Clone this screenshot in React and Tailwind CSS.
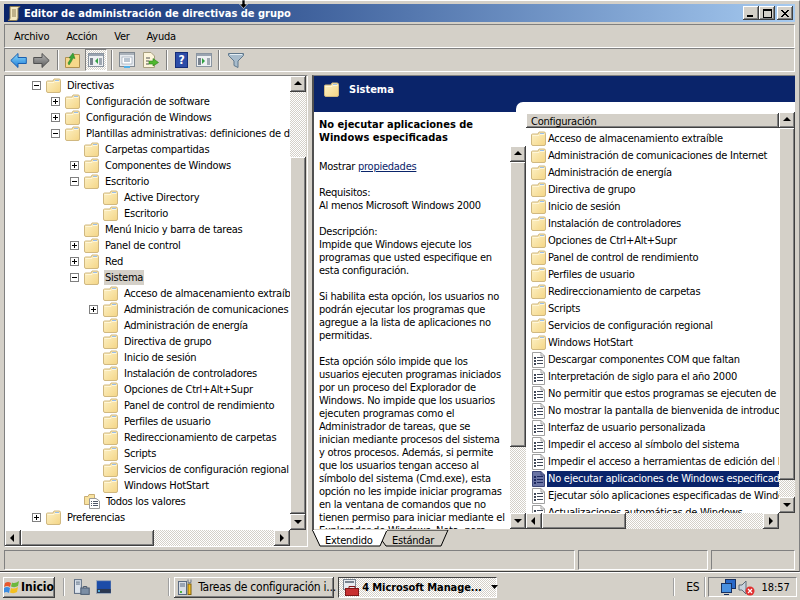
import React from 'react';

const bevel = 'shadow-[inset_-1px_-1px_0_#404040,inset_1px_1px_0_#ffffff,inset_-2px_-2px_0_#808080,inset_2px_2px_0_#d4d0c8]';
const checker = 'bg-[repeating-conic-gradient(#d4d0c8_0_25%,#ffffff_0_50%)] bg-[length:2px_2px]';

const Folder = ({ className = '' }) => (
  <svg width="15" height="15" viewBox="0 0 15 15" className={`shrink-0 ${className}`}>
    <defs>
      <linearGradient id="fold" x1="0" y1="0" x2="1" y2="1">
        <stop offset="0" stopColor="#fdf2c8" />
        <stop offset="1" stopColor="#f4d585" />
      </linearGradient>
    </defs>
    <path d="M.5 4Q.5 3 1.500 3H7L8 1H13Q14.500 1 14.500 2.500V13Q14.500 14.500 13 14.500H2Q.5 14.500 .5 13Z" fill="url(#fold)" stroke="#d0b880" />
    <rect x="9" y="2" width="4" height="1" fill="#9cc0ea" />
    <path d="M1.500 4.500H8L9 3.500H13.500" fill="none" stroke="#fff6d8" />
  </svg>
);

const Policy = ({ selected }) => (
  <svg width="15" height="16" viewBox="0 0 15 16" className="shrink-0">
    <path d="M1.500 .5H10L13.500 4V15.500H1.500Z" fill={selected ? '#6a74a4' : '#ffffff'} stroke={selected ? '#3c4678' : '#a0a0a0'} />
    <path d="M10 .5V4H13.500" fill="none" stroke={selected ? '#3c4678' : '#a0a0a0'} />
    <g fill={selected ? '#1c2860' : '#404858'}>
      <rect x="3" y="5" width="2" height="2" />
      <rect x="3" y="8" width="2" height="2" />
      <rect x="3" y="11" width="2" height="2" />
      <rect x="6" y="5" width="6" height="1" />
      <rect x="6" y="8" width="6" height="1" />
      <rect x="6" y="11" width="6" height="1" />
    </g>
  </svg>
);

const Expander = ({ open }) => (
  <svg width="9" height="9" viewBox="0 0 9 9" className="shrink-0">
    <rect x=".5" y=".5" width="8" height="8" fill="#ffffff" stroke="#808080" />
    <rect x="2" y="4" width="5" height="1" fill="#000000" />
    {!open && <rect x="4" y="2" width="1" height="5" fill="#000000" />}
  </svg>
);

const Arrow = ({ dir }) => {
  const pts = { up: '4,1 0,5 8,5', down: '0,2 8,2 4,6', left: '5,0 5,8 1,4', right: '2,0 2,8 6,4' };
  return (
    <svg width="8" height="8" viewBox="0 0 8 8">
      <polygon points={pts[dir]} fill="#000000" />
    </svg>
  );
};

const SBtn = ({ dir }) => (
  <div className={`w-[16px] h-[16px] shrink-0 bg-[#d4d0c8] flex items-center justify-center ${bevel}`}>
    <Arrow dir={dir} />
  </div>
);

const Thumb = ({ className }) => <div className={`shrink-0 bg-[#d4d0c8] ${bevel} ${className}`} />;

const treeIndent = {
  1: 'pl-[27px]',
  2: 'pl-[46px]',
  3: 'pl-[65px]',
  4: 'pl-[84px]',
};

const treeRows = [
  [1, 'open', 'Directivas'],
  [2, 'plus', 'Configuración de software'],
  [2, 'plus', 'Configuración de Windows'],
  [2, 'open', 'Plantillas administrativas: definiciones de directivas'],
  [3, '', 'Carpetas compartidas'],
  [3, 'plus', 'Componentes de Windows'],
  [3, 'open', 'Escritorio'],
  [4, '', 'Active Directory'],
  [4, '', 'Escritorio'],
  [3, '', 'Menú Inicio y barra de tareas'],
  [3, 'plus', 'Panel de control'],
  [3, 'plus', 'Red'],
  [3, 'open', 'Sistema', 'sel'],
  [4, '', 'Acceso de almacenamiento extraíble'],
  [4, 'plus', 'Administración de comunicaciones de Internet'],
  [4, '', 'Administración de energía'],
  [4, '', 'Directiva de grupo'],
  [4, '', 'Inicio de sesión'],
  [4, '', 'Instalación de controladores'],
  [4, '', 'Opciones de Ctrl+Alt+Supr'],
  [4, '', 'Panel de control de rendimiento'],
  [4, '', 'Perfiles de usuario'],
  [4, '', 'Redireccionamiento de carpetas'],
  [4, '', 'Scripts'],
  [4, '', 'Servicios de configuración regional'],
  [4, '', 'Windows HotStart'],
  [3, '', 'Todos los valores', 'all'],
  [1, 'plus', 'Preferencias'],
];

const AllValues = () => (
  <svg width="16" height="16" viewBox="0 0 16 16" className="shrink-0">
    <path d="M.5 3.500H4L5 1.500H10.500V11.500H.5Z" fill="#f8e2a0" stroke="#c8ad74" />
    <path d="M5.500 5.500H12L15.500 8V15.500H5.500Z" fill="#ffffff" stroke="#9a9a9a" />
    <g fill="#505868">
      <rect x="7" y="8" width="1" height="1" />
      <rect x="9" y="8" width="5" height="1" />
      <rect x="7" y="10" width="1" height="1" />
      <rect x="9" y="10" width="5" height="1" />
      <rect x="7" y="12" width="1" height="1" />
      <rect x="9" y="12" width="5" height="1" />
    </g>
  </svg>
);

const TreeRow = ({ row }) => {
  const [level, exp, label, flag] = row;
  return (
    <div className={`h-[16px] flex items-center whitespace-nowrap ${treeIndent[level]}`}>
      <div className="w-[9px] shrink-0 flex">{exp && <Expander open={exp === 'open'} />}</div>
      <div className="w-[5px] shrink-0" />
      {flag === 'all' ? <AllValues /> : <Folder />}
      <span className={`ml-[5px] px-[1px] h-[15px] leading-[15px] ${flag === 'sel' ? 'bg-[#d4d0c8]' : ''}`}>{label}</span>
    </div>
  );
};

const listFolders = [
  'Acceso de almacenamiento extraíble',
  'Administración de comunicaciones de Internet',
  'Administración de energía',
  'Directiva de grupo',
  'Inicio de sesión',
  'Instalación de controladores',
  'Opciones de Ctrl+Alt+Supr',
  'Panel de control de rendimiento',
  'Perfiles de usuario',
  'Redireccionamiento de carpetas',
  'Scripts',
  'Servicios de configuración regional',
  'Windows HotStart',
];

const listPolicies = [
  'Descargar componentes COM que faltan',
  'Interpretación de siglo para el año 2000',
  'No permitir que estos programas se ejecuten de forma',
  'No mostrar la pantalla de bienvenida de introducción',
  'Interfaz de usuario personalizada',
  'Impedir el acceso al símbolo del sistema',
  'Impedir el acceso a herramientas de edición del Registro',
  'No ejecutar aplicaciones de Windows especificadas',
  'Ejecutar sólo aplicaciones especificadas de Windows',
  'Actualizaciones automáticas de Windows',
];

const descLines = [
  'Al menos Microsoft Windows 2000',
  '',
  'Descripción:',
  'Impide que Windows ejecute los',
  'programas que usted especifique en',
  'esta configuración.',
  '',
  'Si habilita esta opción, los usuarios no',
  'podrán ejecutar los programas que',
  'agregue a la lista de aplicaciones no',
  'permitidas.',
  '',
  'Esta opción sólo impide que los',
  'usuarios ejecuten programas iniciados',
  'por un proceso del Explorador de',
  'Windows. No impide que los usuarios',
  'ejecuten programas como el',
  'Administrador de tareas, que se',
  'inician mediante procesos del sistema',
  'y otros procesos. Además, si permite',
  'que los usuarios tengan acceso al',
  'símbolo del sistema (Cmd.exe), esta',
  'opción no les impide iniciar programas',
  'en la ventana de comandos que no',
  'tienen permiso para iniciar mediante el',
  'Explorador de Windows. Nota: para',
];

const ToolSep = () => <div className="w-[2px] h-[20px] shrink-0 border-l border-l-[#808080] border-r border-r-white" />;

const NavArrow = ({ flip, light }) => (
  <svg width="17" height="15" viewBox="0 0 17 15" className={flip ? '-scale-x-100' : ''}>
    <defs>
      <linearGradient id={light ? 'ag' : 'ab'} x1="0" y1="0" x2="0" y2="1">
        <stop offset="0" stopColor={light ? '#b8b8b8' : '#8fdcfa'} />
        <stop offset="1" stopColor={light ? '#5c5c5c' : '#1c7ad8'} />
      </linearGradient>
    </defs>
    <path d="M8 .5L.8 7.500L8 14.500V10.500H16.300V4.500H8Z" fill={`url(#${light ? 'ag' : 'ab'})`} stroke={light ? '#505050' : '#1a5fb0'} />
  </svg>
);

const PaneIcon = ({ arrowLeft }) => (
  <svg width="16" height="14" viewBox="0 0 16 14">
    <rect x=".5" y=".5" width="15" height="13" fill="#eef0f2" stroke="#8a94a0" />
    <rect x="1" y="1" width="14" height="2" fill="#9aa4b0" />
    <rect x="2" y="5" width="3" height="7" fill="#7a8490" />
    {arrowLeft ? <polygon points="10,5 10,11 7,8" fill="#30a040" /> : <polygon points="6,5 6,11 9,8" fill="#30a040" />}
    <rect x="11" y="5" width="3" height="7" fill="#a0a8b2" />
  </svg>
);

const Flag = () => (
  <svg width="16" height="15" viewBox="0 0 16 15" className="shrink-0">
    <path d="M1 3Q4 1 7 3L6 7Q3 5 0 7Z" fill="#e8582c" />
    <path d="M8 2.500Q11 4 15 1L14 6Q11 8 7 6.500Z" fill="#6cb83c" />
    <path d="M0 8Q3 6 6 8L5 13Q2 11 -.5 13Z" fill="#3c8ce0" />
    <path d="M7 8Q10 9.500 14 7L13 12Q10 14 6 12.500Z" fill="#f4c020" />
  </svg>
);

export default function App() {
  return (
    <div className="w-[800px] h-[600px] relative overflow-hidden bg-[#d4d0c8] flex flex-col text-[11px] leading-[13px] tracking-[-0.25px] text-black [font-family:'DejaVu_Sans_Condensed','DejaVu_Sans',sans-serif]">
      {/* Window */}
      <div className="h-[572px] shrink-0 flex flex-col border-b border-b-[#404040] border-r border-r-[#808080] border-t border-t-white">
        <div className="h-[3px] shrink-0" />
        {/* Title bar */}
        <div className="mx-[4px] h-[18px] shrink-0 flex items-center bg-linear-to-r from-[#0a246a] to-[#a6caf0] pl-[3px] pr-[2px]">
          <svg width="14" height="15" viewBox="0 0 14 15" className="shrink-0">
            <path d="M3 .5H13L11 2.500V12Q11 14.500 9 14.500H1Q3 14 3 12Z" fill="#f4e8c0" stroke="#8a7a50" />
            <path d="M5 4H9M5 6H9M5 8H9M5 10H9" stroke="#8a7a50" />
          </svg>
          <span className="ml-[3px] font-bold text-white tracking-normal whitespace-nowrap">Editor de administración de directivas de grupo</span>
          <div className="ml-auto flex">
            <div className={`w-[16px] h-[14px] bg-[#d4d0c8] flex items-end pl-[4px] pb-[3px] ${bevel}`}>
              <div className="w-[6px] h-[2px] bg-black" />
            </div>
            <div className={`w-[16px] h-[14px] bg-[#d4d0c8] flex items-center justify-center ${bevel}`}>
              <div className="w-[9px] h-[9px] border border-black border-t-2" />
            </div>
            <div className={`ml-[2px] w-[16px] h-[14px] bg-[#d4d0c8] flex items-center justify-center ${bevel}`}>
              <svg width="8" height="7" viewBox="0 0 8 7">
                <path d="M0 0L7 7M1 0L8 7M7 0L0 7M8 0L1 7" stroke="#000000" />
              </svg>
            </div>
          </div>
        </div>

        {/* Menu */}
        <div className="mt-[2px] mx-[4px] h-[24px] shrink-0 flex items-center pl-[9px] gap-[17px] border-t border-t-[#808080] border-l border-l-[#808080] border-r border-r-white border-b border-b-white">
          <span>Archivo</span>
          <span>Acción</span>
          <span>Ver</span>
          <span>Ayuda</span>
        </div>

        {/* Toolbar */}
        <div className="mx-[4px] h-[24px] shrink-0 flex items-center pl-[5px] border-t border-t-[#808080] border-l border-l-[#808080] border-r border-r-white border-b border-b-white">
          <NavArrow />
          <div className="w-[6px]" />
          <NavArrow flip light />
          <div className="w-[7px]" />
          <ToolSep />
          <div className="w-[6px]" />
          <svg width="16" height="16" viewBox="0 0 16 16">
            <path d="M.5 5.500H8L9 2.500H14.500V15.500H.5Z" fill="#f6d88a" stroke="#b09050" />
            <path d="M3 11Q5 8 6 6L4 6L8 1L10 6.500L8 6Q7 9 4 13Z" fill="#3aa53a" stroke="#1f7a1f" strokeWidth=".5" />
          </svg>
          <div className="w-[4px]" />
          <div className={`w-[22px] h-[22px] flex items-center justify-center border border-t-[#808080] border-l-[#808080] border-b-white border-r-white ${checker}`}>
            <PaneIcon arrowLeft />
          </div>
          <div className="w-[4px]" />
          <ToolSep />
          <div className="w-[6px]" />
          <svg width="16" height="16" viewBox="0 0 16 16">
            <rect x=".5" y=".5" width="15" height="14" fill="#e8ecf0" stroke="#808890" />
            <rect x="1" y="1" width="14" height="2" fill="#aab2ba" />
            <rect x="3" y="5" width="10" height="7" fill="#ffffff" stroke="#8a98a8" strokeWidth=".6" />
            <path d="M5 7H11M5 9H11" stroke="#7088a0" />
            <rect x="5" y="14" width="6" height="2" fill="#50b0e8" />
          </svg>
          <div className="w-[7px]" />
          <svg width="17" height="16" viewBox="0 0 17 16">
            <path d="M1.500 .5H9L12.500 4V15.500H1.500Z" fill="#fdf6dc" stroke="#a8a080" />
            <path d="M4 6H8M4 9H7M4 12H7" stroke="#505050" />
            <path d="M7 9H11V6.500L16.500 10.500L11 14V12H7Z" fill="#50b830" stroke="#2a8018" strokeWidth=".6" />
          </svg>
          <div className="w-[7px]" />
          <ToolSep />
          <div className="w-[7px]" />
          <div className="w-[13px] h-[16px] bg-[#2c4ca8] border border-[#142c78] flex items-center justify-center text-white font-bold text-[12px]">?</div>
          <div className="w-[8px]" />
          <PaneIcon />
          <div className="w-[6px]" />
          <ToolSep />
          <div className="w-[8px]" />
          <svg width="16" height="15" viewBox="0 0 16 15">
            <path d="M.5 .5H15.500V2.500L10 8V14.500L6 12.500V8L.5 2.500Z" fill="#a8bccc" stroke="#60788c" />
            <path d="M2 1.500H14" stroke="#e4eef4" />
          </svg>
        </div>

        {/* Panes */}
        <div className="mt-[3px] mx-[4px] flex gap-[4px] h-[473px] shrink-0">
          {/* Tree pane */}
          <div className="w-[304px] h-[472px] shrink-0 flex flex-col border-t border-t-[#808080] border-l border-l-[#808080] border-b border-b-white border-r border-r-white">
            <div className="flex h-[454px] shrink-0">
              <div className="w-[285px] bg-white overflow-hidden pt-[1px]">
                {treeRows.map((row, i) => <TreeRow key={i} row={row} />)}
              </div>
              <div className={`w-[16px] flex flex-col ${checker}`}>
                <SBtn dir="up" />
                <div className="h-[65px] shrink-0" />
                <Thumb className="h-[357px]" />
                <div className="flex-1" />
                <SBtn dir="down" />
              </div>
            </div>
            <div className="flex h-[16px] shrink-0">
              <div className={`w-[285px] flex ${checker}`}>
                <SBtn dir="left" />
                <Thumb className="w-[133px]" />
                <div className="flex-1" />
                <SBtn dir="right" />
              </div>
              <div className="w-[16px] bg-[#d4d0c8]" />
            </div>
          </div>

          {/* Right column */}
          <div className="w-[483px] flex flex-col">
            <div className="h-[455px] shrink-0 flex flex-col border-t border-t-[#808080] border-l-2 border-l-[#505050] overflow-hidden">
              <div className="h-[36px] shrink-0 flex justify-between bg-[#0a246a]">
                <div className="flex pl-[10px] pt-[6px]">
                  <Folder />
                  <span className="ml-[10px] mt-[1px] text-white font-bold tracking-normal">Sistema</span>
                </div>
                <div className="w-[279px] h-[10px] mt-[26px] bg-white rounded-tl-[7px]" />
              </div>
              <div className="flex h-[417px] bg-white">
                {/* Description */}
                <div className="w-[212px] shrink-0 flex">
                  <div className="w-[196px] shrink-0 pl-[5px] pt-[6px] whitespace-nowrap overflow-hidden">
                    <div className="font-bold tracking-normal">No ejecutar aplicaciones de</div>
                    <div className="font-bold tracking-normal">Windows especificadas</div>
                    <div className="mt-[16px]">Mostrar <span className="underline text-[#0a246a]">propiedades</span></div>
                    <div className="mt-[13px]">Requisitos:</div>
                    {descLines.map((line, i) => <div key={i} className="h-[13px]">{line}</div>)}
                  </div>
                  <div className="w-[16px] mt-[34px] flex flex-col">
                    <SBtn dir="up" />
                    <Thumb className="h-[285px]" />
                    <div className={`flex-1 ${checker}`} />
                    <SBtn dir="down" />
                  </div>
                </div>
                {/* List */}
                <div className="w-[269px] flex flex-col">
                  <div className="h-[401px] flex shrink-0">
                    <div className="w-[253px] shrink-0 flex flex-col overflow-hidden">
                      <div className={`mt-[1px] h-[15px] shrink-0 bg-[#d4d0c8] pl-[5px] leading-[17px] ${bevel}`}>Configuración</div>
                      <div className="pt-[2px] h-[385px] overflow-hidden">
                        {listFolders.map((t) => (
                          <div key={t} className="h-[17px] flex items-center pl-[5px] whitespace-nowrap">
                            <Folder />
                            <span className="ml-[1px] px-[1px]">{t}</span>
                          </div>
                        ))}
                        {listPolicies.map((t, i) => (
                          <div key={t} className="h-[17px] flex items-center pl-[5px] whitespace-nowrap">
                            <Policy selected={i === 7} />
                            <span className={`ml-[1px] px-[1px] h-[16px] leading-[16px] flex-1 overflow-hidden ${i === 7 ? 'bg-[#0a246a] text-white' : ''}`}>{t}</span>
                          </div>
                        ))}
                      </div>
                    </div>
                    <div className="w-[16px] flex flex-col">
                      <SBtn dir="up" />
                      <Thumb className="h-[352px]" />
                      <div className={`flex-1 ${checker}`} />
                      <SBtn dir="down" />
                    </div>
                  </div>
                  <div className="h-[16px] flex shrink-0">
                    <div className={`w-[253px] flex ${checker}`}>
                      <SBtn dir="left" />
                      <Thumb className="w-[84px]" />
                      <div className="flex-1" />
                      <SBtn dir="right" />
                    </div>
                    <div className="w-[16px] bg-[#d4d0c8]" />
                  </div>
                </div>
              </div>
            </div>
            {/* Tabs */}
            <div className="relative h-[18px] w-[140px] shrink-0 flex items-center pt-[2px]">
              <svg width="140" height="18" viewBox="0 0 140 18" className="absolute inset-0">
                <polygon points="74,0 136,0 129,16 74,16 68,8" fill="#d4d0c8" stroke="#000000" />
                <polygon points="0.5,0 8,16 68,16 75,0" fill="#ffffff" stroke="#000000" />
                <rect x="1" y="0" width="74" height="1" fill="#ffffff" />
              </svg>
              <span className="relative ml-[13px] w-[67px]">Extendido</span>
              <span className="relative">Estándar</span>
            </div>
          </div>
        </div>

        {/* Status bar */}
        <div className="mt-[2px] mx-[4px] h-[20px] shrink-0 flex gap-[3px]">
          <div className="w-[571px] border-t border-t-[#808080] border-l border-l-[#808080] border-r border-r-white border-b border-b-white" />
          <div className="w-[130px] border-t border-t-[#808080] border-l border-l-[#808080] border-r border-r-white border-b border-b-white" />
          <div className="flex-1 border-t border-t-[#808080] border-l border-l-[#808080] border-r border-r-white border-b border-b-white" />
        </div>
      </div>

      {/* Taskbar */}
      <div className="flex-1 border-t border-t-white flex items-center pl-[3px] pr-[3px] pt-[1px]">
        <div className={`w-[53px] h-[21px] flex items-center pl-[1px] gap-[1px] font-bold text-[12px] tracking-normal ${bevel}`}>
          <Flag />
          <span>Inicio</span>
        </div>
        <div className="w-[2px] h-[18px] ml-[8px] bg-white border-l border-l-[#a0a0a0]" />
        <div className="w-[8px]" />
        <svg width="17" height="17" viewBox="0 0 17 17">
          <rect x="1.500" y=".5" width="7" height="14" fill="#dde4ec" stroke="#5a6a80" />
          <path d="M3 3H7M3 5H7" stroke="#5a6a80" />
          <rect x="8" y="9" width="8.500" height="6.500" fill="#7c8ea4" stroke="#4a5a70" />
          <path d="M10.500 9V7.500H14V9" fill="none" stroke="#4a5a70" />
        </svg>
        <div className="w-[6px]" />
        <svg width="16" height="15" viewBox="0 0 16 15">
          <rect x=".5" y=".5" width="15" height="13" fill="#1c4ca8" stroke="#a0aab8" />
          <rect x="1" y="9" width="14" height="4" fill="#2c3850" />
          <rect x="2" y="10" width="2" height="2" fill="#50b0e0" />
        </svg>
        <div className="w-[2px] h-[18px] ml-[57px] bg-white border-l border-l-[#a0a0a0]" />
        <div className={`ml-[4px] w-[160px] h-[21px] flex items-center pl-[4px] gap-[4px] ${bevel}`}>
          <svg width="16" height="16" viewBox="0 0 16 16" className="shrink-0">
            <rect x=".5" y="2.500" width="8" height="13" fill="#d8dee6" stroke="#5a6a80" />
            <path d="M2 5H7M2 7H7" stroke="#5a6a80" />
            <rect x="2" y="12" width="2" height="2" fill="#50b040" />
            <rect x="10" y="5" width="3" height="10.500" fill="#f4c020" stroke="#806010" />
            <path d="M10 .5V3L11.500 4.500L13 3V.5" fill="none" stroke="#7a8490" strokeWidth="1.200" />
          </svg>
          <span className="text-[12px] whitespace-nowrap">Tareas de configuración i...</span>
        </div>
        <div className={`ml-[4px] w-[159px] h-[21px] flex items-center pl-[4px] gap-[3px] border border-t-[#404040] border-l-[#404040] border-b-white border-r-white ${checker}`}>
          <svg width="16" height="17" viewBox="0 0 16 17" className="shrink-0">
            <rect x=".5" y=".5" width="12" height="10" fill="#e8ecf0" stroke="#7a8490" />
            <path d="M2 3H11" stroke="#7a8490" strokeWidth="2" />
            <rect x="2.500" y="9.500" width="13" height="7" fill="#c83030" stroke="#801818" />
            <path d="M6 9.500V7.500H12V9.500" fill="none" stroke="#801818" />
          </svg>
          <span className="font-bold tracking-[-0.1px] whitespace-nowrap">4 Microsoft Manage...</span>
          <svg width="7" height="4" viewBox="0 0 7 4" className="ml-[6px] shrink-0">
            <polygon points="0,0 7,0 3.500,4" fill="#000000" />
          </svg>
        </div>
        <div className="w-[2px] h-[18px] ml-[176px] bg-white border-l border-l-[#a0a0a0]" />
        <span className="ml-[11px] text-[12px]">ES</span>
        <div className="w-[2px] h-[20px] ml-[5px] bg-white border-l border-l-[#a0a0a0]" />
        <div className="ml-[2px] w-[90px] h-[20px] flex items-center pl-[11px] border border-t-[#808080] border-l-[#808080] border-b-white border-r-white">
          <svg width="17" height="17" viewBox="0 0 17 17" className="shrink-0">
            <rect x="5.500" y=".5" width="10" height="9" fill="#2868c8" stroke="#183060" />
            <rect x="1.500" y="4.500" width="10" height="9" fill="#4890e0" stroke="#183060" />
            <path d="M4 15.500H9" stroke="#183060" />
          </svg>
          <svg width="17" height="17" viewBox="0 0 17 17" className="ml-[1px] shrink-0">
            <path d="M1 6H4L8 2V15L4 11H1Z" fill="#c8d2dc" stroke="#606c78" />
            <circle cx="12" cy="12" r="4.500" fill="#e03030" />
            <path d="M10 10L14 14M14 10L10 14" stroke="#ffffff" strokeWidth="1.200" />
          </svg>
          <span className="ml-[6px] tracking-normal">18:57</span>
        </div>
      </div>

      {/* Mouse cursor */}
      <svg width="9" height="9" viewBox="0 0 9 9" className="absolute left-[239px] top-0">
        <path d="M3 0H6V4H8.500L4.500 8.500L.5 4H3Z" fill="#000000" stroke="#ffffff" strokeWidth=".6" />
      </svg>
    </div>
  );
}
